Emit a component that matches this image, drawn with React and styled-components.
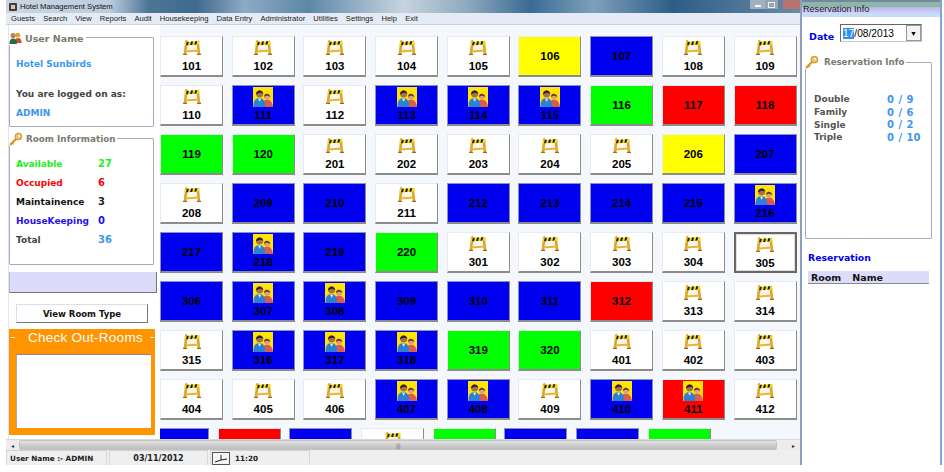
import React from 'react';
import styled, { createGlobalStyle } from 'styled-components';

const GlobalStyle = createGlobalStyle`
  html, body { margin: 0; padding: 0; background: #fff; }
  body { width: 944px; height: 472px; overflow: hidden; font-family: "DejaVu Sans", sans-serif; }
`;

const Screen = styled.div`
  width: 944px;
  height: 472px;
  display: flex;
  background: #fff;
  overflow: hidden;
`;

const MainWindow = styled.div`
  width: 800px;
  height: 465px;
  display: flex;
  flex-direction: column;
  padding-left: 6px;
  box-sizing: border-box;
  flex: none;
`;

const TitleBar = styled.div`
  height: 13px;
  flex: none;
  display: flex;
  align-items: center;
  gap: 2px;
  padding-left: 2px;
  background: linear-gradient(90deg, #c9d6e2 0, #bccde0 13%, #4d7596 18%, #3f6a8e 24%, #8cabc3 30%, #5d87a8 38%, #c6d4df 50%, #8faac0 58%, #3a6b94 66%, #7ea0bb 74%, #2d5d86 84%, #6a8aa5 100%);
  font: 7.7px "Liberation Sans", sans-serif;
  color: #111;
`;

const WindowButtons = styled.div`
  margin-left: auto;
  display: flex;
  align-self: flex-start;
  height: 9px;
  gap: 0;
  font-size: 0;
`;

const WindowButton = styled.span`
  width: ${p => p.$w}px;
  height: 9px;
  margin-left: ${p => p.$gap || 0}px;
  background: ${p => p.$bg};
  display: flex;
  align-items: center;
  justify-content: center;
`;

const MinGlyph = styled.i`
  display: block;
  width: 6px;
  height: 2px;
  background: #f4f4f4;
  margin-top: 2px;
`;

const MaxGlyph = styled.i`
  display: block;
  width: 5px;
  height: 4px;
  border: 1px solid #eee;
`;

const MenuBar = styled.div`
  height: 11px;
  flex: none;
  display: flex;
  align-items: center;
  gap: 8.1px;
  padding-left: 5px;
  background: #e4ebf4;
  border-bottom: 1px solid #c8d2e0;
  font: 7.6px "Liberation Sans", sans-serif;
  color: #222;
`;

const Workspace = styled.div`
  flex: 1;
  min-height: 0;
  display: flex;
`;

const SidePanel = styled.div`
  width: 154px;
  flex: none;
  display: flex;
  background: #fff;
  padding-left: 2px;
  box-sizing: border-box;
`;

const SideColumn = styled.div`
  flex: 1;
  display: flex;
  flex-direction: column;
  padding-top: 12px;
  border-left: 1px solid #e2e2f6;
`;

const Fieldset = styled.div`
  position: relative;
  box-sizing: border-box;
  flex: none;
  width: ${p => p.$w || 145}px;
  height: ${p => p.$h}px;
  margin: ${p => p.$top || 0}px 0 0 ${p => p.$left || 0}px;
  border: 1px solid #aaa9c0;
  border-radius: 1px;
  padding: ${p => p.$pad || '0 6px'};
`;

const Legend = styled.div`
  position: absolute;
  top: ${p => p.$y || -7}px;
  left: -1px;
  display: flex;
  align-items: center;
  gap: ${p => p.$gap || 3}px;
  background: #fff;
  padding-right: 2px;
  font: bold ${p => p.$size || 9.5}px "DejaVu Sans", sans-serif;
  color: #7a7a70;
  height: 14px;
  white-space: nowrap;
`;

const InfoText = styled.div`
  font: bold 9px "DejaVu Sans", sans-serif;
  color: ${p => p.$color || '#444'};
  margin-top: ${p => p.$top || 0}px;
  white-space: nowrap;
`;

const StatRow = styled.div`
  display: grid;
  grid-template-columns: 82px 1fr;
  height: 19px;
  align-items: center;
  font: bold 9px "DejaVu Sans", sans-serif;
  color: ${p => p.$color};
`;

const StatValue = styled.span`
  font-size: 10px;
  color: ${p => p.$color};
`;

const BlueStrip = styled.div`
  width: 148px;
  height: 21px;
  flex: none;
  box-sizing: border-box;
  margin-top: 7px;
  background: #dcdcfa;
  border-right: 1px solid #777;
  border-bottom: 1px solid #777;
  border-left: 1px solid #bbb;
`;

const RoomTypeButton = styled.div`
  width: 132px;
  height: 19px;
  flex: none;
  margin: 11px 0 0 7px;
  box-sizing: border-box;
  display: flex;
  align-items: center;
  justify-content: center;
  background: #fff;
  border: 1px solid #dcdcee;
  border-right: 1px solid #777;
  border-bottom: 1px solid #777;
  font: bold 8.5px "DejaVu Sans", sans-serif;
  color: #111;
`;

const CheckoutBox = styled.div`
  width: 146px;
  height: 106px;
  flex: none;
  margin-top: 6px;
  background: #ff9300;
  display: flex;
  flex-direction: column;
  position: relative;
  box-sizing: border-box;
  padding: 0 4px 0 7px;
`;

const CheckoutTitle = styled.div`
  height: 25px;
  flex: none;
  box-sizing: border-box;
  padding: 1px 0 9px 4px;
  display: flex;
  align-items: center;
  justify-content: center;
  font: 13.5px "Liberation Sans", sans-serif;
  color: #fff;
  letter-spacing: 0.25px;
`;

const CheckoutLine = styled.span`
  position: absolute;
  top: 8px;
  width: 4px;
  height: 1px;
  background: #eee;
  ${p => (p.$right ? 'right: 1px;' : 'left: 2px;')}
`;

const CheckoutList = styled.div`
  height: 74px;
  flex: none;
  box-sizing: border-box;
  background: #fff;
  border-top: 1px solid #888;
  border-left: 1px solid #aaa;
`;

const GridArea = styled.div`
  flex: 1;
  min-width: 0;
  display: flex;
  flex-direction: column;
`;

const GridViewport = styled.div`
  flex: 1;
  min-height: 0;
  background: #f4f7fc;
  overflow: hidden;
  padding-top: 11px;
  box-sizing: border-box;
  position: relative;
`;

const RoomGrid = styled.div`
  display: grid;
  grid-template-columns: repeat(9, 63px);
  grid-auto-rows: 41px;
  column-gap: 8.7px;
  row-gap: 8px;
`;

const LastRow = styled(RoomGrid)`
  margin-top: 8px;
  margin-left: -14px;
`;

const Room = styled.div`
  box-sizing: border-box;
  height: 41px;
  background: ${p => p.$bg};
  border: 1px solid #e8eaf0;
  border-right: 1px solid #8c8c8c;
  border-bottom: 2px solid #8c8c8c;
  display: flex;
  flex-direction: column;
  align-items: center;
  justify-content: ${p => (p.$icon ? 'flex-start' : 'center')};
  font: bold 11.5px "Liberation Sans", sans-serif;
  color: #000;
  ${p => p.$selected && 'border: 2px solid #6d6560; outline: 1px solid #ddd; outline-offset: -3px;'}
  ${p => p.$dark && 'border-color: #8f8fb8 #8c8c8c #8c8c8c #8f8fb8;'}
`;

const RoomLabel = styled.span`
  line-height: 13px;
  margin-top: ${p => p.$top}px;
`;

const IconSlot = styled.span`
  display: block;
  flex: none;
  width: ${p => p.$w}px;
  height: ${p => p.$h}px;
  margin-top: ${p => p.$top}px;
`;

const HScroll = styled.div`
  height: 11px;
  flex: none;
  display: flex;
  align-items: stretch;
  background: #ececec;
  border-top: 1px solid #d8d8d8;
  box-sizing: border-box;
`;

const ScrollArrow = styled.div`
  width: 13px;
  flex: none;
  font: 6px "DejaVu Sans", sans-serif;
  color: #333;
  display: flex;
  align-items: center;
  justify-content: center;
`;

const ScrollThumb = styled.div`
  flex: 1;
  margin-right: 10px;
  background: linear-gradient(#e2e2e2, #bdbdbd);
  border: 1px solid #c4c4c4;
  border-radius: 2px;
  display: flex;
  align-items: center;
  justify-content: center;
  color: #777;
  font: 6px "DejaVu Sans", sans-serif;
  letter-spacing: -0.5px;
`;

const StatusBar = styled.div`
  height: 15px;
  flex: none;
  display: flex;
  gap: 2px;
  background: #efefef;
  font: bold 8px "DejaVu Sans", sans-serif;
  color: #222;
`;

const StatusCell = styled.div`
  width: ${p => p.$w}px;
  box-sizing: border-box;
  display: flex;
  align-items: center;
  justify-content: ${p => (p.$center ? 'center' : 'flex-start')};
  gap: 5px;
  padding-left: ${p => p.$pad || 0}px;
  border-top: 1px solid #d0d0d0;
  border-left: 1px solid #d8d8d8;
  border-right: 1px solid #d8d8d8;
  ${p => p.$tight && 'font-size: 7.25px;'}
`;

const ReservationWindow = styled.div`
  width: 142px;
  height: 465px;
  flex: none;
  box-sizing: border-box;
  background: #fff;
  border-left: 2px solid #8aa0bd;
  border-right: 2px solid #7ea6d6;
  display: flex;
  flex-direction: column;
`;

const ResTitle = styled.div`
  height: 17px;
  flex: none;
  box-sizing: border-box;
  padding: 4px 0 0 1px;
  background: linear-gradient(#6f8a9c 0, #6f8a9c 2px, #8fb5a6 2px, #8fb5a6 7px, #b7b4ee 7px, #cfd0f4 13px, #c4dcf6 13px, #c4dcf6 17px);
  font: 9.1px "Liberation Sans", sans-serif;
  color: #222;
  white-space: nowrap;
`;

const DateRow = styled.div`
  display: flex;
  align-items: flex-start;
  margin: 7px 0 0 7px;
  font: bold 9.5px "DejaVu Sans", sans-serif;
  color: #0000ee;
`;

const DateLabel = styled.span`
  width: 31px;
  flex: none;
  padding-top: 7px;
`;

const DatePicker = styled.div`
  width: 82px;
  height: 18px;
  box-sizing: border-box;
  display: flex;
  align-items: center;
  justify-content: space-between;
  padding-left: 2px;
  border: 1px solid #666;
  border-right-color: #aaa;
  border-bottom-color: #ccc;
  font: 10.2px "Liberation Sans", sans-serif;
  color: #000;
`;

const DateSel = styled.span`
  background: #3390ee;
  color: #fff;
`;

const DateArrow = styled.span`
  width: 13px;
  height: 14px;
  display: flex;
  align-items: center;
  justify-content: center;
  border: 1px solid #999;
  font-size: 7px;
  background: #f4f4f4;
`;

const ResStats = styled.div`
  margin-top: 30px;
  display: flex;
  flex-direction: column;
  padding-left: 2px;
`;

const ResStat = styled.div`
  display: grid;
  grid-template-columns: 73px 1fr;
  height: 12.7px;
  align-items: center;
  font: bold 9px "DejaVu Sans", sans-serif;
  color: #555;
`;

const ResValue = styled.span`
  font-size: 10px;
  color: #3c96f0;
  word-spacing: 1px;
`;

const ResHeading = styled.div`
  margin: 13px 0 0 6px;
  font: bold 9.3px "DejaVu Sans", sans-serif;
  color: #0000ee;
`;

const ResHeader = styled.div`
  margin: 8px 0 0 6px;
  width: 121px;
  height: 13px;
  box-sizing: border-box;
  display: flex;
  gap: 11px;
  align-items: center;
  padding-left: 3px;
  background: #dcdcfa;
  border-bottom: 1px solid #888;
  font: bold 9.5px "DejaVu Sans", sans-serif;
  color: #111;
`;

const BarrierIcon = () => (
  <svg viewBox="0 0 20 15" width="20" height="15" style={{ display: 'block' }}>
    <path d="M4 3 L16 3 L16.5 12 L3.5 12 Z" fill="#f8f5ea" />
    <path d="M4.4 1 L3 14 M15.6 1 L17 14" stroke="#dca528" strokeWidth="2.6" fill="none" />
    <path d="M3.4 11.6 L16.8 10.6" stroke="#e8b432" strokeWidth="2" fill="none" />
    <path d="M2.6 2 L17.4 1 L17.6 4.4 L2.8 5.4 Z" fill="#f6d81c" />
    <path d="M4.8 1.9 L6.8 1.8 L6 5.2 L4 5.3 Z M9 1.6 L11 1.5 L10.2 4.9 L8.2 5 Z M13.2 1.3 L15.2 1.2 L14.4 4.6 L12.4 4.7 Z" fill="#1d1d1d" />
    <path d="M1 14.4 L5 14.4 M15 14.4 L19 14.4" stroke="#9a6a18" strokeWidth="1.2" />
    <circle cx="4.4" cy="1" r="1" fill="#f09a28" />
  </svg>
);

const CoupleIcon = () => (
  <svg viewBox="0 0 20 20" width="20" height="20" style={{ display: 'block' }}>
    <rect width="20" height="20" fill="#ffe600" />
    <path d="M9 20 Q9 12.5 14 12.5 Q19 12.5 20 20 Z" fill="#dc5a50" />
    <circle cx="14" cy="9.5" r="3.1" fill="#e0a27e" />
    <path d="M10.8 9 Q13.5 4.5 17.3 9 L17 10 Q14.5 7.5 11.5 9.8 Z" fill="#6a3a22" />
    <path d="M0.5 20 Q0 11 6.5 11 Q12 11 12.5 20 Z" fill="#2f7fd2" />
    <path d="M5 11.5 L8 11.5 L6.8 15 Z" fill="#e8eef6" />
    <circle cx="6.6" cy="6.8" r="3.6" fill="#a86f48" />
    <path d="M2.8 6.4 Q6.6 0.8 10.4 6.2 L9.8 6.6 Q6.6 4.4 3.6 7.2 Z" fill="#27221f" />
  </svg>
);

const UsersIcon = () => (
  <svg viewBox="0 0 14 13" width="13" height="12" style={{ display: 'block' }}>
    <circle cx="9.5" cy="3.4" r="2.6" fill="#d9a22a" />
    <path d="M6 12 Q6 6.5 9.8 6.5 Q13.6 6.5 13.6 12 Z" fill="#d04a3a" />
    <circle cx="4.4" cy="3.8" r="2.8" fill="#b98352" />
    <path d="M0.4 13 Q0.4 7 4.4 7 Q8.6 7 8.6 13 Z" fill="#2c6b3e" />
  </svg>
);

const KeyIcon = () => (
  <svg viewBox="0 0 14 14" width="14" height="14" style={{ display: 'block' }}>
    <path d="M7 7 L1.6 12.4" stroke="#d69a32" strokeWidth="2.2" strokeLinecap="round" />
    <path d="M3.2 10.8 L4.6 12.2" stroke="#d69a32" strokeWidth="1.6" />
    <circle cx="9.4" cy="4.6" r="3.4" fill="#f0c35e" stroke="#cc8f2c" strokeWidth="1" />
    <circle cx="10" cy="3.9" r="1" fill="#fff" />
  </svg>
);

const AppIcon = () => (
  <svg viewBox="0 0 10 10" width="10" height="10" style={{ display: 'block' }}>
    <rect x="1" y="1" width="8" height="8" rx="1" fill="#4a3a34" />
    <rect x="3" y="3" width="4" height="4" fill="#d8c8a8" />
  </svg>
);

const ClockIcon = () => (
  <svg viewBox="0 0 18 13" width="18" height="13" style={{ display: 'block' }}>
    <rect x="0.5" y="0.5" width="17" height="12" fill="#f4f4f4" stroke="#555" />
    <path d="M3 10 L9 8 L9 3 M9 8 L15 7" stroke="#222" strokeWidth="1" fill="none" />
  </svg>
);

const W = '#ffffff';
const B = '#0000f0';
const G = '#00ff00';
const R = '#ff0000';
const Y = '#ffff00';

// [number, colour, icon] - b = barrier, c = couple
const rooms = [
  [101, W, 'b'], [102, W, 'b'], [103, W, 'b'], [104, W, 'b'], [105, W, 'b'], [106, Y], [107, B], [108, W, 'b'], [109, W, 'b'],
  [110, W, 'b'], [111, B, 'c'], [112, W, 'b'], [113, B, 'c'], [114, B, 'c'], [115, B, 'c'], [116, G], [117, R], [118, R],
  [119, G], [120, G], [201, W, 'b'], [202, W, 'b'], [203, W, 'b'], [204, W, 'b'], [205, W, 'b'], [206, Y], [207, B],
  [208, W, 'b'], [209, B], [210, B], [211, W, 'b'], [212, B], [213, B], [214, B], [215, B], [216, B, 'c'],
  [217, B], [218, B, 'c'], [219, B], [220, G], [301, W, 'b'], [302, W, 'b'], [303, W, 'b'], [304, W, 'b'], [305, W, 'b'],
  [306, B], [307, B, 'c'], [308, B, 'c'], [309, B], [310, B], [311, B], [312, R], [313, W, 'b'], [314, W, 'b'],
  [315, W, 'b'], [316, B, 'c'], [317, B, 'c'], [318, B, 'c'], [319, G], [320, G], [401, W, 'b'], [402, W, 'b'], [403, W, 'b'],
  [404, W, 'b'], [405, W, 'b'], [406, W, 'b'], [407, B, 'c'], [408, B, 'c'], [409, W, 'b'], [410, B, 'c'], [411, R, 'c'], [412, W, 'b'],
];

const partialRow = [
  [501, B], [502, R], [503, B], [504, W, 'b'], [505, G], [506, B], [507, B], [508, G],
];

const RoomCell = ({ n, bg, icon, showLabel = true }) => (
  <Room $bg={bg} $icon={!!icon} $dark={bg === B} $selected={n === 305}>
    {icon === 'b' && <IconSlot $w={20} $h={15} $top={3}><BarrierIcon /></IconSlot>}
    {icon === 'c' && <IconSlot $w={20} $h={20} $top={1}><CoupleIcon /></IconSlot>}
    {showLabel && <RoomLabel $top={icon === 'b' ? 5 : icon === 'c' ? 2 : 0}>{n}</RoomLabel>}
  </Room>
);

const menus = ['Guests', 'Search', 'View', 'Reports', 'Audit', 'Housekeeping', 'Data Entry', 'Administrator', 'Utilities', 'Settings', 'Help', 'Exit'];

const App = () => (
  <Screen>
    <GlobalStyle />
    <MainWindow>
      <TitleBar>
        <AppIcon />Hotel Management System
        <WindowButtons>
          <WindowButton $w={15} $bg="#9fb0bf"><MinGlyph /></WindowButton>
          <WindowButton $w={13} $bg="#94a6b6"><MaxGlyph /></WindowButton>
          <WindowButton $w={17} $gap={5} $bg="#b5746e" />
        </WindowButtons>
      </TitleBar>
      <MenuBar>{menus.map(m => <span key={m}>{m}</span>)}</MenuBar>
      <Workspace>
        <SidePanel>
          <SideColumn>
            <Fieldset $h={90} $pad="21px 6px 0">
              <Legend><UsersIcon />User Name</Legend>
              <InfoText $color="#3c96f0">Hotel Sunbirds</InfoText>
              <InfoText $top={20}>You are logged on as:</InfoText>
              <InfoText $color="#3c96f0" $top={9}>ADMIN</InfoText>
            </Fieldset>
            <Fieldset $h={127} $top={11} $pad="15px 6px 0">
              <Legend $size={8.8}><KeyIcon />Room Information</Legend>
              <StatRow $color="#22f022">Available<StatValue $color="#22f022">27</StatValue></StatRow>
              <StatRow $color="#ff0000">Occupied<StatValue $color="#ff0000">6</StatValue></StatRow>
              <StatRow $color="#111">Maintainence<StatValue $color="#222">3</StatValue></StatRow>
              <StatRow $color="#2a10ee">HouseKeeping<StatValue $color="#2a10ee">0</StatValue></StatRow>
              <StatRow $color="#444">Total<StatValue $color="#3c96f0">36</StatValue></StatRow>
            </Fieldset>
            <BlueStrip />
            <RoomTypeButton>View Room Type</RoomTypeButton>
            <CheckoutBox>
              <CheckoutLine />
              <CheckoutLine $right />
              <CheckoutTitle>Check Out-Rooms</CheckoutTitle>
              <CheckoutList />
            </CheckoutBox>
          </SideColumn>
        </SidePanel>
        <GridArea>
          <GridViewport>
            <RoomGrid>
              {rooms.map(([n, bg, icon]) => <RoomCell key={n} n={n} bg={bg} icon={icon} />)}
            </RoomGrid>
            <LastRow>
              {partialRow.map(([n, bg, icon]) => <RoomCell key={n} n={n} bg={bg} icon={icon} showLabel={false} />)}
            </LastRow>
          </GridViewport>
        </GridArea>
      </Workspace>
      <HScroll>
        <ScrollArrow>◂</ScrollArrow>
        <ScrollThumb>|||</ScrollThumb>
        <ScrollArrow>▸</ScrollArrow>
      </HScroll>
      <StatusBar>
        <StatusCell $w={101} $pad={3} $tight>User Name :- ADMIN</StatusCell>
        <StatusCell $w={99} $center>03/11/2012</StatusCell>
        <StatusCell $w={100} $pad={1} $tight><ClockIcon />11:20</StatusCell>
      </StatusBar>
    </MainWindow>
    <ReservationWindow>
      <ResTitle>Reservation Info</ResTitle>
      <DateRow>
        <DateLabel>Date</DateLabel>
        <DatePicker><span><DateSel>17</DateSel>/08/2013</span><DateArrow>▼</DateArrow></DatePicker>
      </DateRow>
      <Fieldset $w={127} $h={177} $top={20} $left={3} $pad="0 6px">
        <Legend $size={8.65} $gap={5} $y={-8}><KeyIcon />Reservation Info</Legend>
        <ResStats>
          <ResStat>Double<ResValue>0 / 9</ResValue></ResStat>
          <ResStat>Family<ResValue>0 / 6</ResValue></ResStat>
          <ResStat>Single<ResValue>0 / 2</ResValue></ResStat>
          <ResStat>Triple<ResValue>0 / 10</ResValue></ResStat>
        </ResStats>
      </Fieldset>
      <ResHeading>Reservation</ResHeading>
      <ResHeader><span>Room</span><span>Name</span></ResHeader>
    </ReservationWindow>
  </Screen>
);

export default App;
